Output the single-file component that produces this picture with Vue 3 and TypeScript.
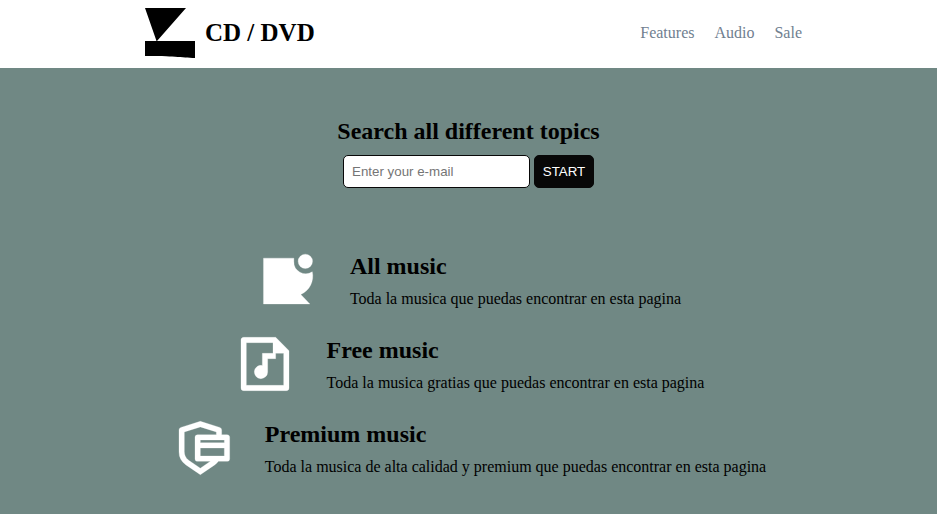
<script setup lang="ts">
interface Feature {
  title: string
  text: string
  path: string
}

const links: string[] = ['Features', 'Audio', 'Sale']

const features: Feature[] = [
  {
    title: 'All music',
    text: 'Toda la musica que puedas encontrar en esta pagina',
    path: 'M2.8 3.8H14.2V5A4.45 4.45 0 0 0 21.1 8.9C21.9 12.2 20.2 16 16.8 17.4L20.2 21H2.8zM18.5 2.3a2.7 2.7 0 1 1 0 5.4a2.7 2.7 0 0 1 0-5.4z',
  },
  {
    title: 'Free music',
    text: 'Toda la musica gratias que puedas encontrar en esta pagina',
    path: 'M16 8v2h-3v5a2.5 2.5 0 1 1-2-2.45V8h4V4H5v16h14V8h-3zM3 2.992C3 2.444 3.447 2 3.999 2H16l5 5v13.993A1 1 0 0 1 20.007 22H3.993A1 1 0 0 1 3 21.008V2.992z',
  },
  {
    title: 'Premium music',
    text: 'Toda la musica de alta calidad y premium que puedas encontrar en esta pagina',
    path: 'M11 2l7.298 2.28a1 1 0 0 1 .702.955V7h2a1 1 0 0 1 1 1v8a1 1 0 0 1-1 1l-3.22.001c-.387.51-.857.96-1.4 1.33L11 22l-5.38-3.668A6 6 0 0 1 3 13.374V5.235a1 1 0 0 1 .702-.954L11 2zm0 2.094L5 5.97v7.404a4 4 0 0 0 1.558 3.169l.189.136L11 19.58 14.782 17H10a1 1 0 0 1-1-1V8a1 1 0 0 1 1-1h7V5.97l-6-1.876zM11 12v3h9v-3h-9zm0-2h9V9h-9v1z',
  },
]
</script>

<template>
  <div class="page">
    <header class="header">
      <div class="brand">
        <svg class="logo" viewBox="0 0 50 50">
          <path d="M0 0H41L12 33H50V50C36 49.5 28 48 0 48V33H11.5z" />
        </svg>
        <h1>CD / DVD</h1>
      </div>
      <nav class="nav">
        <a v-for="link in links" :key="link">{{ link }}</a>
      </nav>
    </header>
    <main class="main">
      <section class="search">
        <h2>Search all different topics</h2>
        <form class="form" @submit.prevent>
          <input type="email" placeholder="Enter your e-mail" />
          <button type="submit">START</button>
        </form>
      </section>
      <section class="features">
        <article v-for="f in features" :key="f.title" class="feature">
          <svg class="icon" viewBox="0 0 24 24"><path :d="f.path" fill-rule="evenodd" /></svg>
          <div>
            <h2>{{ f.title }}</h2>
            <p>{{ f.text }}</p>
          </div>
        </article>
      </section>
    </main>
  </div>
</template>

<style>
body {
  margin: 0;
  overflow: hidden;
}
</style>

<style scoped>
.page {
  height: 514px;
  display: flex;
  flex-direction: column;
  font-family: "Liberation Serif", "Times New Roman", serif;
  font-size: 16px;
  color: #000;
}
h1,
h2,
p {
  margin: 0;
}
h1,
h2 {
  font-size: 24px;
  line-height: 28px;
}
h1 {
  font-size: 25px;
}
.header {
  box-sizing: border-box;
  height: 68px;
  padding: 8px 135px 10px 145px;
  display: flex;
  justify-content: space-between;
  align-items: center;
  background: #fff;
}
.brand {
  display: flex;
  align-items: center;
  gap: 10px;
}
.logo {
  width: 50px;
  height: 50px;
}
.nav {
  display: flex;
  gap: 20px;
  color: #708090;
}
.main {
  flex: 1;
  background: #708884;
}
.search {
  padding-top: 49px;
  display: flex;
  flex-direction: column;
  align-items: center;
}
.form {
  margin-top: 10px;
  display: flex;
  gap: 4px;
}
input,
button {
  box-sizing: border-box;
  height: 33px;
  font-family: "Liberation Sans", Arial, sans-serif;
  font-size: 13.333px;
  border: 1px solid #080808;
  border-radius: 5px;
}
input {
  width: 187px;
  padding: 0 8px;
  background: #fff;
}
input::placeholder {
  color: #757575;
}
button {
  width: 60px;
  padding: 0;
  background: #080808;
  color: #fff;
}
.features {
  margin-top: 60px;
  display: flex;
  flex-direction: column;
  align-items: center;
  gap: 20px;
}
.feature {
  height: 64px;
  display: flex;
  gap: 30px;
}
.icon {
  width: 64px;
  height: 64px;
  fill: #fff;
  stroke: #fff;
  stroke-width: 0.1;
}
.feature h2 {
  margin-top: 4px;
}
.feature p {
  margin-top: 10px;
  line-height: 18px;
}
</style>
